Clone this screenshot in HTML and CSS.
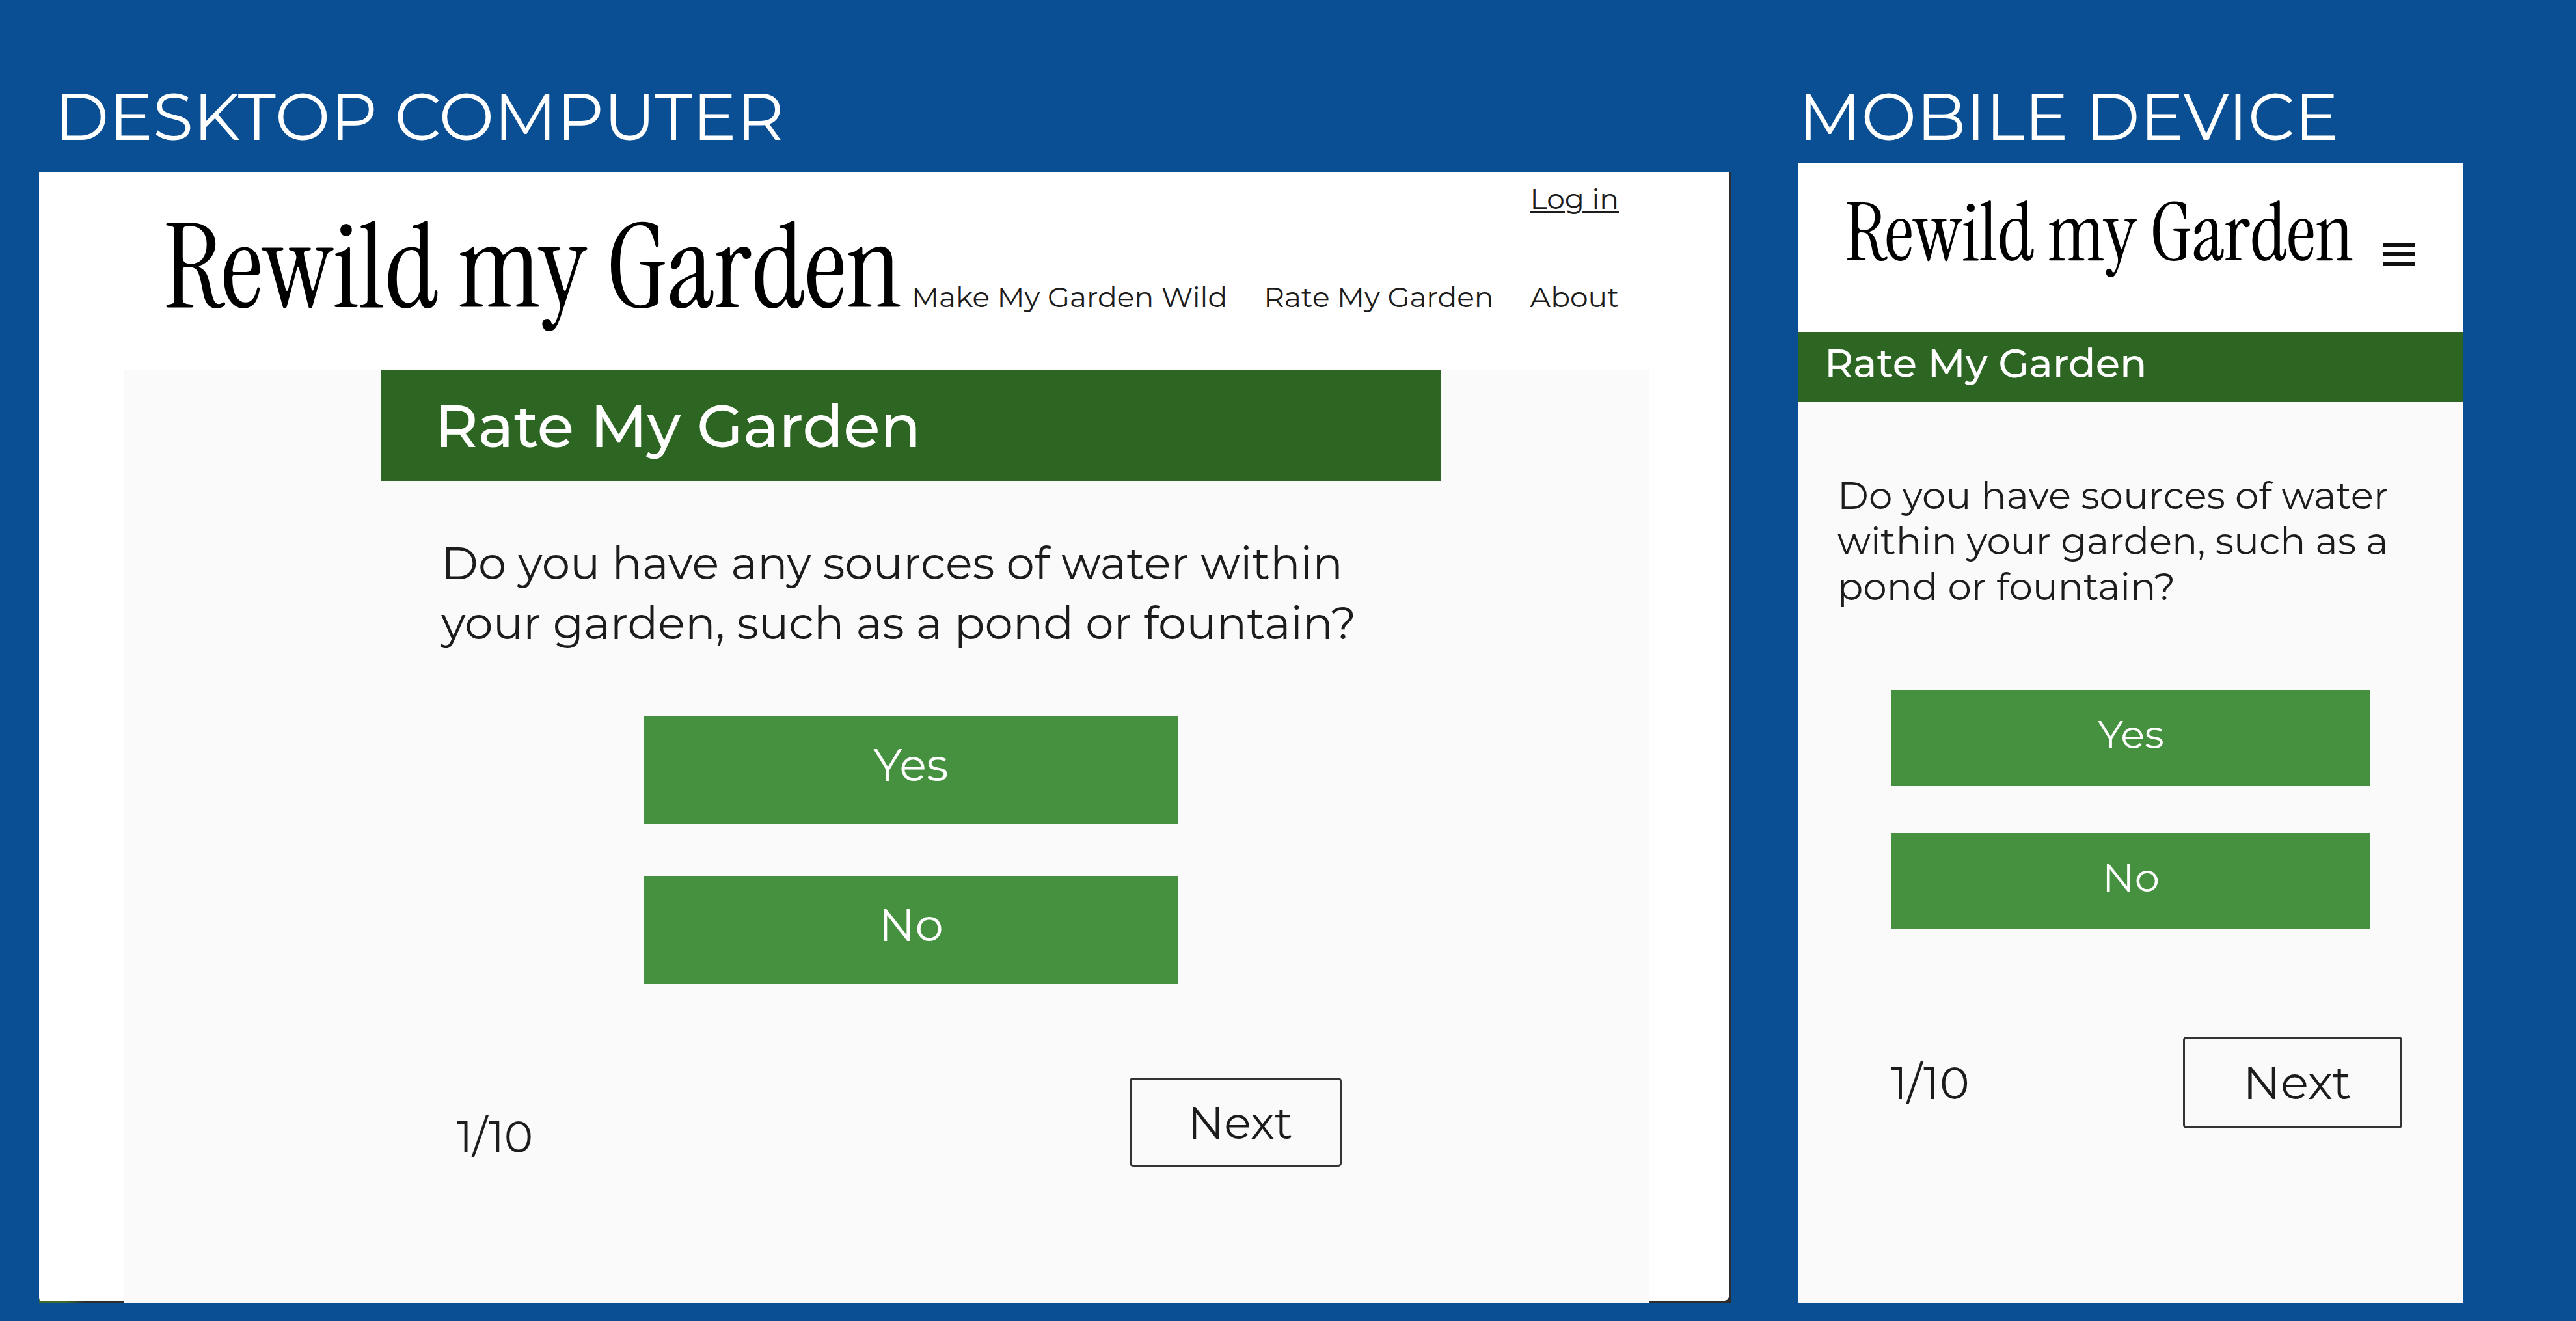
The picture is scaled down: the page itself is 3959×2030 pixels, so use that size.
FILE: index.html
```html
<!DOCTYPE html>
<html lang="en">
<head>
<meta charset="utf-8">
<title>Rewild my Garden – Rate My Garden</title>
<link rel="stylesheet" href="styles.css">
</head>
<body>
<main class="board">
  <section class="device desktop">
    <h1 class="device-name">DESKTOP COMPUTER</h1>
    <div class="window">
      <div class="page">
        <header class="site-header">
          <a class="login" href="#">Log in</a>
          <div class="header-row">
            <div class="logo">Rewild my Garden</div>
            <nav class="nav">
              <a href="#">Make My Garden Wild</a>
              <a href="#">Rate My Garden</a>
              <a href="#">About</a>
            </nav>
          </div>
        </header>
        <div class="content">
          <div class="quiz">
            <h2 class="title">Rate My Garden</h2>
            <p class="question">Do you have any sources of water within your garden, such as a pond or fountain?</p>
            <div class="answers">
              <button class="answer" type="button">Yes</button>
              <button class="answer" type="button">No</button>
            </div>
            <div class="footer">
              <span class="count">1/10</span>
              <button class="next" type="button">Next</button>
            </div>
          </div>
        </div>
      </div>
    </div>
  </section>

  <section class="device mobile">
    <h1 class="device-name">MOBILE DEVICE</h1>
    <div class="phone">
      <header class="site-header">
        <div class="logo">Rewild my Garden</div>
        <button class="menu" type="button" aria-label="Menu">
          <svg viewBox="0 0 50 34" aria-hidden="true"><path d="M0 3h50M0 17h50M0 31h50" stroke="#111" stroke-width="6"/></svg>
        </button>
      </header>
      <h2 class="title">Rate My Garden</h2>
      <p class="question">Do you have sources of water within your garden, such as a pond or fountain?</p>
      <div class="answers">
        <button class="answer" type="button">Yes</button>
        <button class="answer" type="button">No</button>
      </div>
      <div class="footer">
        <span class="count">1/10</span>
        <button class="next" type="button">Next</button>
      </div>
    </div>
  </section>
</main>
</body>
</html>
```
FILE: styles.css
```css
* {
  box-sizing: border-box;
  margin: 0;
}

body {
  background: #0a4e93;
  color: #1c1c1c;
  font-family: "Montserrat", "Inter", sans-serif;
}

button {
  font: inherit;
  color: inherit;
  padding: 0;
  border: 0;
  background: none;
}

.board {
  display: grid;
  grid-template-columns: 2600fr 1022fr;
  column-gap: 104px;
  min-height: 100vh;
  padding: 119px 173px 27px 60px;
}

.device {
  display: flex;
  flex-direction: column;
}

.device-name {
  color: #fff;
  font-size: 101px;
  font-weight: 400;
  line-height: 120px;
}

.logo {
  color: #000;
  font-family: "Instrument Serif", "Liberation Serif", serif;
  white-space: nowrap;
}

.title {
  background: #2d6622;
  color: #fff;
  font-weight: 500;
}

.answers {
  display: flex;
  flex-direction: column;
}

.answer {
  background: #45913f;
  color: #fff;
}

.footer {
  display: flex;
  justify-content: space-between;
}

.next {
  border: 3px solid #333;
  border-radius: 5px;
}

/* Desktop */
.desktop .device-name {
  padding-left: 24px;
  margin-bottom: 25px;
}

.window {
  display: flex;
  flex: 1;
  padding: 0 2px 3px 0;
  background: linear-gradient(to right, #3f6b2c 40px, #2e2e2e 70px);
}

.page {
  display: flex;
  flex: 1;
  flex-direction: column;
  background: #fff;
  border-radius: 0 0 12px 6px;
}

.desktop .site-header {
  display: flex;
  flex-direction: column;
  min-height: 304px;
  padding: 14px 170px 0 192px;
}

.login {
  align-self: flex-end;
  color: inherit;
  font-size: 44px;
  line-height: 54px;
  text-decoration-thickness: 3px;
  text-underline-offset: 4px;
}

.header-row {
  display: flex;
  align-items: baseline;
  justify-content: space-between;
}

.desktop .logo {
  font-size: 180px;
  line-height: 158px;
}

.nav {
  display: flex;
  gap: 56px;
  font-size: 44px;
  line-height: 54px;
  white-space: nowrap;
}

.nav a {
  color: inherit;
  text-decoration: none;
}

.content {
  display: grid;
  flex: 1;
  grid-template-columns: 396fr 1628fr 320fr;
  margin: 0 124px -3px 130px;
  background: #fafafa;
}

.quiz {
  grid-column: 2;
}

.desktop .title {
  padding: 2px 0 0 82px;
  font-size: 92px;
  line-height: 169px;
}

.desktop .question {
  padding: 80px 90px 97px 92px;
  font-size: 69px;
  line-height: 92px;
}

.desktop .answers {
  gap: 80px;
  padding: 0 404px;
}

.desktop .answer {
  height: 166px;
  padding-bottom: 17px;
  font-size: 69px;
}

.desktop .footer {
  align-items: flex-end;
  padding: 144px 152px 0 116px;
}

.desktop .count {
  font-size: 67px;
  line-height: 92px;
}

.desktop .next {
  width: 326px;
  height: 137px;
  padding-left: 14px;
  font-size: 69px;
}

/* Mobile */
.mobile .device-name {
  margin-bottom: 11px;
}

.phone {
  flex: 1;
  background: #fafafa;
}

.mobile .site-header {
  display: flex;
  align-items: flex-end;
  justify-content: space-between;
  padding: 48px 74px 92px 72px;
  background: #fff;
}

.mobile .logo {
  font-size: 124px;
  line-height: 120px;
}

.menu {
  width: 50px;
  height: 34px;
  margin-bottom: 10px;
}

.menu svg {
  display: block;
  width: 100%;
}

.mobile .title {
  padding: 0 40px 11px;
  font-size: 61px;
  line-height: 96px;
}

.mobile .question {
  padding: 110px 80px 123px 60px;
  font-size: 58px;
  line-height: 70px;
}

.mobile .answers {
  gap: 72px;
  padding: 0 14%;
}

.mobile .answer {
  height: 148px;
  padding-bottom: 13px;
  font-size: 61px;
}

.mobile .footer {
  align-items: center;
  padding: 165px 94px 0 142px;
}

.mobile .count {
  font-size: 69px;
}

.mobile .next {
  width: 337px;
  height: 141px;
  padding-left: 14px;
  font-size: 71px;
}
```
